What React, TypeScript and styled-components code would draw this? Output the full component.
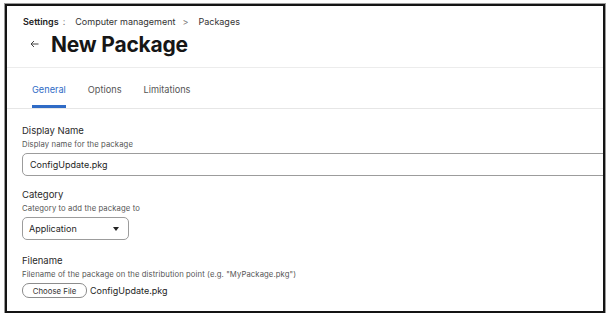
import styled, { createGlobalStyle } from "styled-components"

const GlobalStyle = createGlobalStyle`
  html, body {
    margin: 0;
    padding: 0;
    background: #ffffff;
  }
  body {
    font-family: Inter, "Noto Sans", sans-serif;
  }
`

const App = () => {
  return (
    <>
      <GlobalStyle />
      <Frame>
        <Header>
          <Crumbs>
            <CrumbStrong>Settings</CrumbStrong>
            <CrumbSep>:</CrumbSep>
            <span>Computer management</span>
            <CrumbSep>&gt;</CrumbSep>
            <span>Packages</span>
          </Crumbs>
          <TitleRow>
            <Back>
              <svg width="9" height="8" viewBox="0 0 9 8" fill="none">
                <path d="M8.5 4H1M4 1L1 4l3 3" stroke="#444" strokeWidth="1" />
              </svg>
            </Back>
            <Title>New Package</Title>
          </TitleRow>
        </Header>
        <Tabs>
          <Tab active>General</Tab>
          <Tab>Options</Tab>
          <Tab>Limitations</Tab>
        </Tabs>
        <Form>
          <Field>
            <Label>Display Name</Label>
            <Help>Display name for the package</Help>
            <TextInput>ConfigUpdate.pkg</TextInput>
          </Field>
          <Field gap={12}>
            <Label>Category</Label>
            <Help>Category to add the package to</Help>
            <Select>
              <span>Application</span>
              <svg width="6" height="4" viewBox="0 0 6 4">
                <path d="M0 0h6L3 4z" fill="#222" />
              </svg>
            </Select>
          </Field>
          <Field gap={14}>
            <Label>Filename</Label>
            <Help>Filename of the package on the distribution point (e.g. "MyPackage.pkg")</Help>
            <FileRow>
              <FileButton>Choose File</FileButton>
              <FileName>ConfigUpdate.pkg</FileName>
            </FileRow>
          </Field>
        </Form>
      </Frame>
    </>
  )
}
export default App

const Frame = styled.div`
  margin: 4px 0 0 5px;
  width: 600px;
  height: 309px;
  box-sizing: border-box;
  border: 2px solid #141414;
  box-shadow: 0 0 0 1px #9a9a9a;
  overflow: hidden;
  background: #ffffff;
`
const Header = styled.div`
  padding: 8px 0 8px 16px;
  border-bottom: 1px solid #ececec;
`
const Crumbs = styled.div`
  display: flex;
  align-items: center;
  height: 14px;
  font-size: 9px;
  color: #333;
  gap: 7px;
`
const CrumbStrong = styled.span`
  font-weight: 600;
  color: #222;
  margin-right: -3px;
`
const CrumbSep = styled.span`
  color: #777;
  margin-right: 3px;
`
const TitleRow = styled.div`
  display: flex;
  align-items: center;
  height: 30px;
  margin-top: 1px;
`
const Back = styled.div`
  width: 28px;
  padding-left: 7px;
  box-sizing: border-box;
  display: flex;
  align-items: center;
`
const Title = styled.h1`
  margin: 0;
  font-size: 21px;
  font-weight: 700;
  color: #161616;
  letter-spacing: -0.2px;
`
const Tabs = styled.div`
  display: flex;
  gap: 22px;
  height: 40px;
  padding-left: 25px;
  border-bottom: 1px solid #e6e6e6;
`
const Tab = styled.div<{ active?: boolean }>`
  box-sizing: border-box;
  height: 40px;
  padding-top: 15px;
  font-size: 9.2px;
  line-height: 14px;
  color: ${({ active }) => (active ? "#2f6bc6" : "#555")};
  border-bottom: 3px solid ${({ active }) => (active ? "#2f6bc6" : "transparent")};
`
const Form = styled.div`
  padding: 15px 0 0 15px;
`
const Field = styled.div<{ gap?: number }>`
  margin-top: ${({ gap }) => gap || 0}px;
`
const Label = styled.div`
  font-size: 9.5px;
  line-height: 14px;
  color: #2a2a2a;
`
const Help = styled.div`
  margin-top: 1px;
  font-size: 7.7px;
  line-height: 12px;
  color: #555;
  letter-spacing: 0.1px;
`
const TextInput = styled.div`
  margin-top: 2px;
  width: 640px;
  height: 23px;
  box-sizing: border-box;
  border: 1px solid #9c9c9c;
  border-radius: 5px;
  padding-left: 7px;
  display: flex;
  align-items: center;
  font-size: 9px;
  color: #1e1e1e;
`
const Select = styled.div`
  margin-top: 2px;
  width: 107px;
  height: 23px;
  box-sizing: border-box;
  border: 1px solid #9c9c9c;
  border-radius: 5px;
  padding: 0 9px 0 6px;
  display: flex;
  align-items: center;
  justify-content: space-between;
  font-size: 9px;
  color: #1e1e1e;
`
const FileRow = styled.div`
  margin-top: 2px;
  display: flex;
  align-items: center;
  gap: 3px;
`
const FileButton = styled.div`
  width: 65px;
  height: 15px;
  box-sizing: border-box;
  border: 1px solid #8c8c8c;
  border-radius: 7px;
  display: flex;
  align-items: center;
  justify-content: center;
  font-size: 7.8px;
  color: #333;
`
const FileName = styled.div`
  font-size: 9px;
  color: #1e1e1e;
`
